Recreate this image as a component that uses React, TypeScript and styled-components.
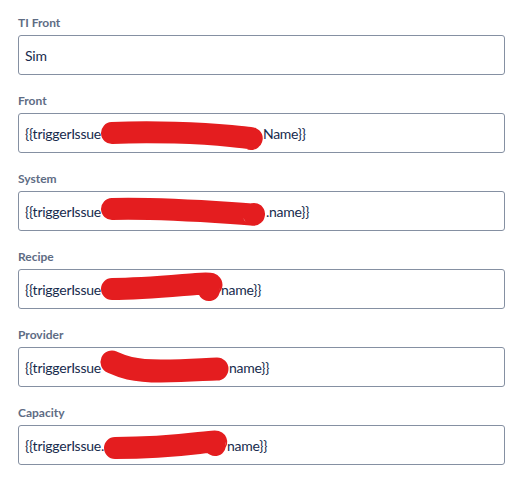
import React from "react";
import styled, { createGlobalStyle } from "styled-components";

const GlobalStyle = createGlobalStyle`
  html, body {
    margin: 0;
    background: #fff;
  }
  body {
    font-family: "Segoe UI", Lato, "Noto Sans", sans-serif;
  }
`;

const Form = styled.div`
  display: flex;
  flex-direction: column;
  gap: 18px;
  width: 487px;
  padding: 15px 0 0 18px;
`;

const Field = styled.div`
  display: flex;
  flex-direction: column;
  gap: 4px;
`;

const Label = styled.label`
  color: #5e6c84;
  font-size: 12px;
  font-weight: 700;
  line-height: 16px;
  height: 16px;
`;

const Input = styled.div`
  box-sizing: border-box;
  height: 40px;
  display: flex;
  align-items: center;
  padding: 0 6px;
  border: 1px solid #8590a2;
  border-radius: 3px;
  color: #172b4d;
  font-size: 14px;
  letter-spacing: -0.25px;
  white-space: pre;
`;

const Redacted = styled.span<{ $w: number }>`
  position: relative;
  align-self: stretch;
  width: ${({ $w }) => $w}px;
  svg {
    position: absolute;
    left: 0;
    top: 0;
    overflow: visible;
  }
`;

type Scribble = { w: number; d: string; sw: number };

const Marker = ({ w, d, sw }: Scribble) => (
  <Redacted $w={w}>
    <svg width={w} height={38} viewBox={`0 0 ${w} 38`}>
      <path
        d={d}
        fill="none"
        stroke="#e41d1f"
        strokeWidth={sw}
        strokeLinecap="round"
        strokeLinejoin="round"
      />
    </svg>
  </Redacted>
);

type Row = {
  label: string;
  prefix?: string;
  suffix?: string;
  plain?: string;
  mark?: Scribble;
};

const rows: Row[] = [
  { label: "TI Front", plain: "Sim" },
  {
    label: "Front",
    prefix: "{{triggerIssue",
    suffix: "Name}}",
    mark: { w: 162, sw: 22, d: "M11 19 C 50 17, 100 19, 130 22 S 148 24, 150 25" },
  },
  {
    label: "System",
    prefix: "{{triggerIssue",
    suffix: ".name}}",
    mark: { w: 165, sw: 22, d: "M11 17 C 50 16, 100 19, 130 21 S 151 23, 153 22" },
  },
  {
    label: "Recipe",
    prefix: "{{triggerIssue",
    suffix: "name}}",
    mark: { w: 120, sw: 22, d: "M11 19 C 40 19, 70 16, 95 14 S 107 16, 108 20" },
  },
  {
    label: "Provider",
    prefix: "{{triggerIssue",
    suffix: "name}}",
    mark: { w: 128, sw: 23, d: "M11 14 C 20 18, 30 23, 60 23 S 105 21, 116 21" },
  },
  {
    label: "Capacity",
    prefix: "{{triggerIssue.",
    suffix: "name}}",
    mark: { w: 123, sw: 22, d: "M11 22 C 40 22, 70 20, 95 17 S 110 16, 111 19" },
  },
];

export default function App() {
  return (
    <>
      <GlobalStyle />
      <Form>
        {rows.map((r) => (
          <Field key={r.label}>
            <Label>{r.label}</Label>
            <Input>
              {r.plain ?? (
                <>
                  {r.prefix}
                  {r.mark && <Marker {...r.mark} />}
                  {r.suffix}
                </>
              )}
            </Input>
          </Field>
        ))}
      </Form>
    </>
  );
}
